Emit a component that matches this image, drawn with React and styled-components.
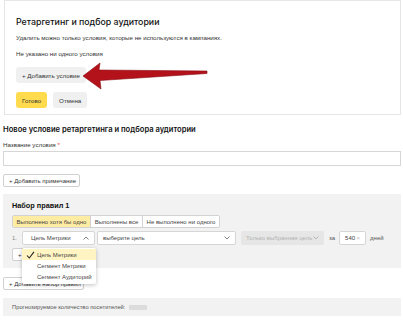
import React from 'react';
import styled, { createGlobalStyle } from 'styled-components';

const Global = createGlobalStyle`
  html, body { margin: 0; padding: 0; background: #fff; }
  body {
    font-family: "Liberation Sans", Arial, sans-serif;
    color: #222;
    width: 403px;
    height: 320px;
    overflow: hidden;
  }
  * { box-sizing: border-box; }
`;

const Page = styled.div`
  position: relative;
  width: 403px;
  padding: 0 2px 0 3px;
`;

const Card = styled.div`
  margin-left: 1px;
  border: 1px solid #e6e6e6;
  padding: 14px 12px 6px 11px;
  display: flex;
  flex-direction: column;
  align-items: flex-start;
`;

const CardTitle = styled.div`
  font-family: Inter, "Liberation Sans", sans-serif;
  font-size: 8.8px;
  line-height: 14px;
  font-weight: 500;
  color: #111;
`;

const Small = styled.div`
  font-size: ${p => p.$size || 6.2}px;
  line-height: 10px;
  color: ${p => p.$color || '#333'};
  margin-top: ${p => p.$mt || 0}px;
`;

const GrayButton = styled.div`
  margin-top: ${p => p.$mt || 0}px;
  height: 16px;
  padding: 0 6px;
  display: flex;
  align-items: center;
  gap: 3px;
  border-radius: 3px;
  background: ${p => (p.$yellow ? '#ffdb4d' : '#f0f0f0')};
  font-size: 6.2px;
  color: #333;
`;

const ButtonRow = styled.div`
  margin-top: 9px;
  display: flex;
  gap: 6px;
`;

const SectionTitle = styled.div`
  margin-top: 9px;
  font-family: Inter, "Liberation Sans", sans-serif;
  font-size: 7.6px;
  line-height: 12px;
  font-weight: 600;
  color: #111;
`;

const Req = styled.span`
  color: #e33;
`;

const TextInput = styled.div`
  margin-top: 1px;
  height: 15px;
  border: 1px solid #d6d6d6;
  background: #fff;
`;

const OutlineButton = styled.div`
  margin-top: ${p => p.$mt || 0}px;
  height: 13px;
  width: ${p => p.$w}px;
  padding: 0 5px;
  display: flex;
  align-items: center;
  gap: 3px;
  border: 1px solid #d0d0d0;
  border-radius: 2px;
  background: #fff;
  font-size: 6px;
  color: #333;
  white-space: nowrap;
  overflow: hidden;
`;

const Panel = styled.div`
  margin-top: 7px;
  background: #f2f2f2;
  padding: 7px 9px 7px 9px;
  display: flex;
  flex-direction: column;
  align-items: flex-start;
`;

const PanelTitle = styled.div`
  font-size: 7.3px;
  line-height: 10px;
  font-weight: 700;
  color: #111;
`;

const Tabs = styled.div`
  margin-top: 4px;
  display: flex;
  height: 13px;
  border: 1px solid #d2d2d2;
  border-radius: 2px;
  overflow: hidden;
`;

const Tab = styled.div`
  width: ${p => p.$w}px;
  display: flex;
  align-items: center;
  justify-content: center;
  font-size: 6px;
  color: #444;
  background: ${p => (p.$active ? '#ffeca3' : '#fff')};
  & + & { border-left: 1px solid #d2d2d2; }
`;

const Row = styled.div`
  margin-top: 3px;
  display: flex;
  align-items: center;
  height: 14px;
  font-size: 6px;
  color: #555;
`;

const Num = styled.div`
  width: 10px;
  color: #888;
`;

const Select = styled.div`
  width: ${p => p.$w}px;
  height: 14px;
  margin-left: ${p => p.$ml || 0}px;
  padding: 0 5px 0 ${p => p.$pl || 5}px;
  display: flex;
  align-items: center;
  justify-content: space-between;
  border: ${p => (p.$disabled ? 'none' : '1px solid #d6d6d6')};
  border-radius: 2px;
  background: ${p => (p.$disabled ? '#e6e6e6' : '#fff')};
  color: ${p => (p.$disabled ? '#b3b3b3' : '#444')};
  font-size: 6px;
  white-space: nowrap;
`;

const Clear = styled.span`
  color: #bbb;
`;

const Word = styled.div`
  margin-left: ${p => p.$ml || 0}px;
  color: #555;
`;

const BottomStrip = styled.div`
  margin-top: 8px;
  height: 18px;
  background: #f2f2f2;
  padding-left: 9px;
  display: flex;
  align-items: center;
  gap: 4px;
  font-size: 5.8px;
  color: #555;
`;

const Blur = styled.div`
  width: 18px;
  height: 5px;
  background: #dcdcdc;
  border-radius: 1px;
`;

const Dropdown = styled.div`
  position: absolute;
  left: 22px;
  top: 248px;
  width: 74px;
  padding: 1px 0 2px;
  background: #fff;
  border-radius: 2px;
  box-shadow: 0 1px 4px rgba(0, 0, 0, 0.25);
  display: flex;
  flex-direction: column;
`;

const Item = styled.div`
  height: 11px;
  display: flex;
  align-items: center;
  padding-left: ${p => (p.$sel ? 4 : 15)}px;
  gap: 2px;
  font-size: 6px;
  color: #444;
  background: ${p => (p.$sel ? '#fff4c2' : 'transparent')};
`;

const Arrow = styled.svg`
  position: absolute;
  left: 0;
  top: 0;
  pointer-events: none;
`;

const Chevron = ({ up, color = '#666' }) => (
  <svg width="6" height="4" viewBox="0 0 6 4">
    <path d={up ? 'M0.5 3.5 L3 1 L5.5 3.5' : 'M0.5 0.5 L3 3 L5.5 0.5'} fill="none" stroke={color} strokeWidth="0.8" />
  </svg>
);

const Check = () => (
  <svg width="9" height="8" viewBox="0 0 9 8">
    <path d="M1 4.5 L3.3 7 L8 0.8" fill="none" stroke="#222" strokeWidth="1.1" />
  </svg>
);

export default function App() {
  return (
    <>
      <Global />
      <Page>
        <Card>
          <CardTitle>Ретаргетинг и подбор аудитории</CardTitle>
          <Small $mt={4}>Удалить можно только условия, которые не используются в кампаниях.</Small>
          <Small $mt={6}>Не указано ни одного условия</Small>
          <GrayButton $mt={8}>+ Добавить условие</GrayButton>
          <ButtonRow>
            <GrayButton $yellow>Готово</GrayButton>
            <GrayButton>Отмена</GrayButton>
          </ButtonRow>
        </Card>

        <SectionTitle>Новое условие ретаргетинга и подбора аудитории</SectionTitle>
        <Small $mt={4}>Название условия <Req>*</Req></Small>
        <TextInput />
        <OutlineButton $mt={8} $w={77}>+ Добавить примечание</OutlineButton>

        <Panel>
          <PanelTitle>Набор правил 1</PanelTitle>
          <Tabs>
            <Tab $w={77} $active>Выполнено хотя бы одно</Tab>
            <Tab $w={52}>Выполнены все</Tab>
            <Tab $w={77}>Не выполнено ни одного</Tab>
          </Tabs>
          <Row>
            <Num>1.</Num>
            <Select $w={73} $pl={8}>Цель Метрики <Chevron up /></Select>
            <Select $w={139} $ml={2}>выберите цель <Chevron /></Select>
            <Select $w={83} $ml={5} $disabled>Только выбранная цель <Chevron color="#aaa" /></Select>
            <Word $ml={5}>за</Word>
            <Select $w={27} $ml={4}>540 <Clear>×</Clear></Select>
            <Word $ml={4}>дней</Word>
          </Row>
          <OutlineButton $mt={3} $w={80}>+</OutlineButton>
        </Panel>

        <OutlineButton $mt={9} $w={81}>+ Добавить набор правил</OutlineButton>

        <BottomStrip>
          Прогнозируемое количество посетителей:
          <Blur />
        </BottomStrip>

        <Dropdown>
          <Item $sel><Check />Цель Метрики</Item>
          <Item>Сегмент Метрики</Item>
          <Item>Сегмент Аудиторий</Item>
        </Dropdown>

        <Arrow width="403" height="320" viewBox="0 0 403 320">
          <polygon
            points="83,76 100,63 99,70 207,71 207,73.5 100,80.5 101,89"
            fill="#b3121b"
            stroke="#8a0c12"
            strokeWidth="0.6"
            strokeLinejoin="round"
          />
        </Arrow>
      </Page>
    </>
  );
}
